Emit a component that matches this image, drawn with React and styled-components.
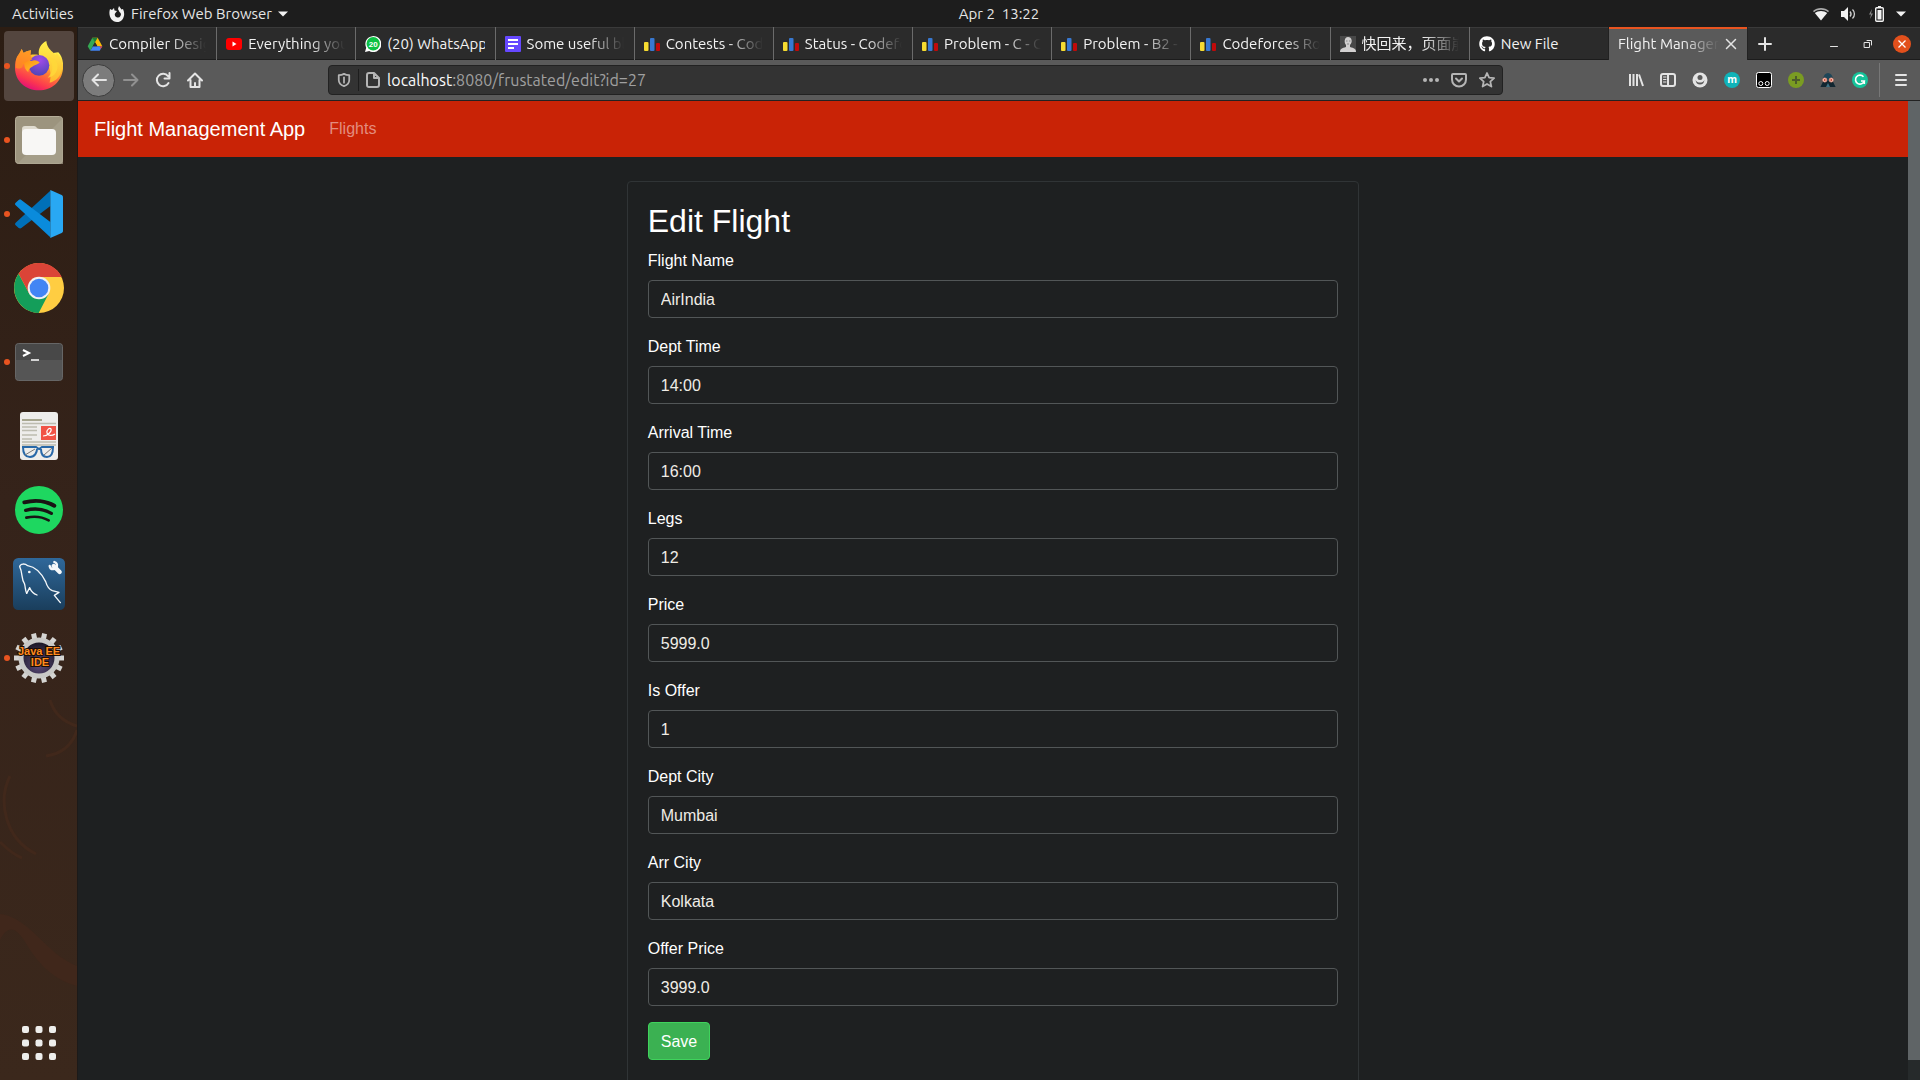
import React from "react";
import styled, { createGlobalStyle } from "styled-components";
import { FaGithub } from "react-icons/fa";

const ui = `Ubuntu, "Noto Sans", "Noto Sans CJK SC", sans-serif`;
const web = `"Liberation Sans", Arial, sans-serif`;

const GlobalStyle = createGlobalStyle`
  *, *::before, *::after { box-sizing: border-box; }
  body { margin: 0; background: #1e2021; }
  button { margin: 0; padding: 0; border: 0; background: none; color: inherit; font: inherit; cursor: pointer; }
  svg { display: block; flex: none; }
`;

const Desktop = styled.div`
  height: 100vh;
  overflow: hidden;
  display: flex;
  flex-direction: column;
  font-family: ${ui};
  font-size: 15px;
  color: #f2f2f2;
`;

/* ---- Top panel ---- */
const Panel = styled.header`
  height: 27px;
  flex: none;
  display: grid;
  grid-template-columns: 78px 1fr auto 1fr;
  align-items: center;
  background: #1d1d1d;
  color: #e6e6e6;
  line-height: 20px;
`;
const Activities = styled.button`
  padding-left: 12px;
  text-align: left;
`;
const AppMenu = styled.button`
  display: flex;
  align-items: center;
  justify-self: start;
  gap: 6px;
  padding-left: 31px;
`;
const Clock = styled.button`
  white-space: pre;
`;
const StatusMenu = styled.button`
  display: flex;
  align-items: center;
  justify-self: end;
  gap: 12px;
  padding-right: 14px;
`;

/* ---- Dock ---- */
const Body = styled.div`
  flex: 1;
  min-height: 0;
  display: flex;
`;
const Dock = styled.nav`
  position: relative;
  width: 78px;
  flex: none;
  display: flex;
  flex-direction: column;
  align-items: center;
  gap: 4px;
  padding: 4px 0 2px;
  border-right: 1px solid #1c1a19;
  background: linear-gradient(#2c1d13, #35231a 45%, #3b281c);
`;
const DockArt = styled.svg`
  position: absolute;
  left: 0;
  bottom: 0;
`;
const Launcher = styled.button`
  position: relative;
  width: 70px;
  height: 70px;
  flex: none;
  display: grid;
  place-items: center;
  border-radius: 4px;
  background: ${(p) => (p.$active ? "#54463f" : "transparent")};
  margin-top: ${(p) => (p.$last ? "auto" : "0")};
`;
const RunningDot = styled.span`
  position: absolute;
  left: 0;
  top: 32px;
  width: 6px;
  height: 6px;
  border-radius: 50%;
  background: #e95420;
`;

/* ---- Browser chrome ---- */
const Browser = styled.div`
  flex: 1;
  min-width: 0;
  display: flex;
  flex-direction: column;
`;
const TabStrip = styled.div`
  height: 33px;
  flex: none;
  display: flex;
  background: #2b2b2b;
  box-shadow: inset 0 1px #3a3a3a, inset 0 -1px #1c1c1c;
`;
const Tabs = styled.div`
  flex: 1;
  min-width: 0;
  display: flex;
`;
const Tab = styled.div`
  flex: 1 1 0;
  min-width: 0;
  display: flex;
  align-items: center;
  gap: 6px;
  padding: 0 10px 0 9px;
  background: ${(p) => (p.$active ? "#5a5a5a" : "transparent")};
  border-right: 1px solid ${(p) => (p.$active ? "#222" : p.$beforeActive ? "#222" : "#6b6b6b")};
  box-shadow: ${(p) => (p.$active ? "inset 0 2px #e95420" : "none")};
`;
const TabTitle = styled.button`
  flex: 1;
  min-width: 0;
  overflow: hidden;
  text-align: left;
  white-space: nowrap;
  line-height: 20px;
  mask-image: ${(p) => (p.$fade ? "linear-gradient(to left, transparent, #000 36px)" : "none")};
`;
const StripControls = styled.div`
  width: 172px;
  flex: none;
  display: flex;
  align-items: center;
  padding-right: 1px;
`;
const StripButton = styled.button`
  width: 34px;
  height: 32px;
  display: grid;
  place-items: center;
  margin-right: ${(p) => (p.$push ? "auto" : "0")};
`;
const ToolBar = styled.div`
  height: 41px;
  flex: none;
  display: flex;
  align-items: center;
  padding: 0 3px 0 4px;
  background: #5a5a5a;
  border-bottom: 1px solid #222;
`;
const ToolButton = styled.button`
  width: 32px;
  height: 32px;
  flex: none;
  display: grid;
  place-items: center;
  border-radius: 50%;
  opacity: ${(p) => (p.$dim ? 0.4 : 1)};
`;
const BackButton = styled(ToolButton)`
  width: 33px;
  height: 33px;
  background: #7c7c7c;
  border: 1px solid #3c3c3c;
`;
const Spacer = styled.span`
  flex: 1 1 0;
`;
const AddressBar = styled.div`
  flex: 10 1 0;
  min-width: 0;
  height: 30px;
  display: flex;
  align-items: center;
  padding: 0 1px;
  background: #333;
  border: 1px solid #222;
  border-radius: 4px;
`;
const BarButton = styled.button`
  width: 28px;
  height: 28px;
  flex: none;
  display: grid;
  place-items: center;
`;
const BarRule = styled.span`
  width: 1px;
  height: 22px;
  background: #1d1d1d;
`;
const Address = styled.a`
  flex: 1;
  color: #a0a0a0;
  text-decoration: none;
  font-size: 16px;
  line-height: 20px;
  white-space: nowrap;
`;
const Host = styled.span`
  color: #fbfbfb;
`;
const ToolRule = styled.span`
  width: 1px;
  height: 34px;
  margin: 0 5px 0 3px;
  background: #777;
`;

/* ---- Web page ---- */
const Viewport = styled.div`
  flex: 1;
  min-height: 0;
  display: flex;
`;
const Page = styled.div`
  flex: 1;
  min-width: 0;
  overflow: hidden;
  background: #1e2021;
  color: #fff;
  font-family: ${web};
  font-size: 16px;
  line-height: 24px;
`;
const ScrollTrack = styled.div`
  width: 12px;
  flex: none;
  background: #262a2b;
`;
const ScrollThumb = styled.div`
  height: 98%;
  background: #5f6466;
`;
const NavBar = styled.nav`
  display: flex;
  align-items: center;
  gap: 24px;
  height: 56px;
  padding: 0 16px;
  background: #c92306;
`;
const Brand = styled.a`
  color: #fff;
  font-size: 20px;
  line-height: 30px;
  text-decoration: none;
`;
const NavLink = styled.a`
  color: #e38d7f;
  line-height: 26px;
  text-decoration: none;
`;
const Column = styled.main`
  width: calc(100% * 5 / 12);
  margin: 24px auto 0;
  padding: 0 15px;
`;
const Card = styled.form`
  padding: 20px 20px 40px;
  border: 1px solid #303436;
  border-radius: 4px;
`;
const Title = styled.h2`
  margin: 0 0 8px;
  font-size: 32px;
  font-weight: 400;
  line-height: 38px;
`;
const Field = styled.div`
  display: flex;
  flex-direction: column;
  gap: 6px;
  margin-bottom: 16px;
  line-height: 26px;
`;
const Input = styled.input`
  width: 100%;
  height: 38px;
  padding: 7px 12px 5px;
  color: #efece6;
  background: #1e2021;
  border: 1px solid #525657;
  border-radius: 4px;
  font: inherit;
  line-height: 24px;
  outline: none;
`;
const Save = styled.button`
  height: 38px;
  padding: 2px 12px 0;
  color: #fff;
  background: #3bb152;
  border: 1px solid #3fd35c;
  border-radius: 4px;
`;

/* ---- Favicons ---- */
const Drive = () => (
  <svg width="16" height="16" viewBox="0 0 48 48">
    <path d="M16 5h16l14 26H31z" fill="#fbbc05" />
    <path d="M16 5L2 31l8 13 14-25z" fill="#34a853" />
    <path d="M16 5l8 14 8-14z" fill="#188038" />
    <path d="M18 31h28l-8 13H10z" fill="#4285f4" />
    <path d="M24 19l-7 12h14z" fill="#2b2b2b" />
    <path d="M38 31h8l-5 8z" fill="#ea4335" />
  </svg>
);
const YouTube = () => (
  <svg width="16" height="16" viewBox="0 0 16 16">
    <rect x="0" y="2" width="16" height="12" rx="3" fill="#f00" />
    <path d="M6.500 5.600v4.800l4-2.400z" fill="#fff" />
  </svg>
);
const WhatsApp = () => (
  <svg width="16" height="16" viewBox="0 0 16 16">
    <path d="M0 16l1.200-4.300A8 8 0 1 1 4.300 15z" fill="#fff" />
    <circle cx="8.200" cy="7.800" r="6.700" fill="#0cc143" />
    <text x="8.200" y="10.600" textAnchor="middle" fontFamily="Liberation Sans" fontWeight="700" fontSize="8" fill="#fff">20</text>
  </svg>
);
const FormIcon = () => (
  <svg width="16" height="16" viewBox="0 0 16 16">
    <rect width="16" height="16" rx="1" fill="#6648ff" />
    <path d="M3 4h10M3 8h10M3 12h6" stroke="#fff" strokeWidth="2" />
  </svg>
);
const Codeforces = () => (
  <svg width="16" height="16" viewBox="0 0 16 16">
    <rect x="0" y="6" width="4.500" height="9" rx="1" fill="#f6db30" />
    <rect x="6" y="2" width="4.500" height="13" rx="1" fill="#3878d0" />
    <rect x="12" y="7" width="4" height="8" rx="1" fill="#c00a0a" />
  </svg>
);
const Portrait = () => (
  <svg width="16" height="16" viewBox="0 0 16 16">
    <rect width="16" height="16" fill="#484848" />
    <path d="M0 16c0-3 2-4 6-5V9C4 7 4 1 8 1s5 5 2 8v2c4 1 6 2 6 5z" fill="#d2d0d0" />
    <path d="M6 5h1.500M9 5h1.500M7 8h2" stroke="#888" strokeWidth="1" />
  </svg>
);

/* ---- Line icons ---- */
const Line = ({ size = 16, w = 2, children, color = "#e4e4e4" }) => (
  <svg width={size} height={size} viewBox="0 0 16 16" fill="none" stroke={color} strokeWidth={w} strokeLinecap="round" strokeLinejoin="round">
    {children}
  </svg>
);
const Caret = () => (
  <svg width="10" height="6" viewBox="0 0 10 6"><path d="M0 .5h10L5 5.500z" fill="#f2f2f2" /></svg>
);

/* ---- Dock icons ---- */
const Firefox = () => (
  <svg width="48" height="50" viewBox="0 0 144 150">
    <defs>
      <linearGradient id="ffBody" x1=".8" y1=".05" x2=".3" y2="1">
        <stop offset="0" stopColor="#fff44f" />
        <stop offset=".3" stopColor="#ffc02c" />
        <stop offset=".55" stopColor="#ff7139" />
        <stop offset=".8" stopColor="#fb3650" />
        <stop offset="1" stopColor="#e00d7a" />
      </linearGradient>
      <radialGradient id="ffGlobe" cx=".55" cy=".25" r=".8">
        <stop offset="0" stopColor="#a24be8" />
        <stop offset="1" stopColor="#4a45b5" />
      </radialGradient>
      <linearGradient id="ffHead" x1="0" y1="0" x2="1" y2="1">
        <stop offset="0" stopColor="#ff8a16" />
        <stop offset="1" stopColor="#ffc928" />
      </linearGradient>
      <linearGradient id="ffFlame" x1="0" y1="0" x2="0" y2="1">
        <stop offset="0" stopColor="#fff04a" />
        <stop offset="1" stopColor="#ffb82e" />
      </linearGradient>
    </defs>
    <path d="M6 48C10 42 16 34 20 24l6 12c6-4 12-6 22-8l-2 14c6-2 14-2 26 0l58-8c12 12 16 32 14 50-4 38-34 64-72 64C32 148 0 120 0 80c0-14 2-24 6-32z" fill="url(#ffBody)" />
    <path d="M72 42C68 24 78 8 94 0c2 16 8 24 18 32 4 4 7 7 9 11l3-8c12 10 18 26 18 42-4 30-18 42-38 48 6-20 6-60-32-83z" fill="url(#ffFlame)" />
    <path d="M94 46c20 14 26 44 4 64 24-2 34-28 28-44-6-10-18-18-32-20z" fill="#ffd83a" opacity=".8" />
    <circle cx="72" cy="73" r="31" fill="url(#ffGlobe)" />
    <path d="M20 66c6-8 18-10 30-6 8-4 16-2 24 4-6 8-16 8-20 12-6 4-14 8-14 18-10-8-12-16-12-24z" fill="url(#ffHead)" />
    <path d="M6 48C10 42 16 34 20 24l6 12c6-4 12-6 22-8-2 8-2 16 4 28-14 2-26 8-30 22-6 6-12 6-20 2 0-14 1-24 4-32z" fill="#ff8c22" opacity=".8" />
  </svg>
);
const Files = () => (
  <svg width="48" height="48" viewBox="0 0 48 48">
    <rect x=".5" y=".5" width="47" height="47" rx="3" fill="#9c947e" stroke="#b5ad98" />
    <path d="M48 2v46H2z" fill="#aaa28e" opacity=".7" />
    <path d="M7 13a3 3 0 0 1 3-3h9c3 0 2 3 6 3v10H7z" fill="#e0dcd0" />
    <rect x="7" y="13" width="34" height="26" rx="4" fill="#f8f7f5" />
    <path d="M7 22v-6h14v6z" fill="#f8f7f5" />
  </svg>
);
const VSCode = () => (
  <svg width="48" height="48" viewBox="0 0 144 144">
    <path d="M106 2L2 98c-3 3-2 6 0 8l9 8c3 2 6 2 8 0l87-66z" fill="#0070b8" />
    <path d="M106 142L2 46c-3-3-2-6 0-8l9-8c3-2 6-2 8 0l87 66z" fill="#0a8bdc" />
    <path d="M106 0l34 15c3 2 4 4 4 7v100c0 3-1 5-4 7l-34 15z" fill="#29a8f3" />
  </svg>
);
const Chrome = () => (
  <svg width="50" height="50" viewBox="0 0 150 150">
    <circle cx="75" cy="75" r="75" fill="#ffcd42" />
    <path d="M14 32L46 92h58l-30 58A75 75 0 0 1 14 32z" fill="#149e5a" />
    <path d="M14 32A75 75 0 0 1 143 42H75L46 92z" fill="#db4437" />
    <circle cx="75" cy="75" r="34" fill="#f1f1f1" />
    <circle cx="75" cy="75" r="28" fill="#4285f4" />
  </svg>
);
const Terminal = () => (
  <svg width="48" height="38" viewBox="0 0 48 38">
    <rect x=".5" y=".5" width="47" height="37" rx="3" fill="#555" stroke="#666" />
    <path d="M1 17V4a3 3 0 0 1 3-3h40a3 3 0 0 1 3 3v13z" fill="#484848" />
    <path d="M8 7l6 3-6 3" fill="none" stroke="#fff" strokeWidth="2" />
    <path d="M16 17h8" stroke="#fff" strokeWidth="1.500" />
  </svg>
);
const Documents = () => (
  <svg width="38" height="48" viewBox="0 0 38 48">
    <rect width="38" height="48" rx="3" fill="#eeedeb" />
    <path d="M2 8h20" stroke="#a7a68f" strokeWidth="2" />
    <path d="M2 11.500h34M2 15h15M2 18.500h15M2 23h15M2 27h10M2 30h34M2 33h34" stroke="#bdbcb0" strokeWidth="1.300" />
    <rect x="21" y="14" width="15" height="14" fill="#f15346" />
    <path d="M23 24c5 0 9-5 8-7s-5 1-4 4 5 3 8 1" fill="none" stroke="#fff" strokeWidth="1.200" />
    <path d="M2 35h14l3 2 3-2h12M3 35c0 6 2 10 7 10s7-5 7-8M21 37c0 5 2 8 6 8s6-4 6-10" fill="none" stroke="#2868a8" strokeWidth="2" />
    <path d="M5 43l10-6M24 43l8-7" stroke="#777" strokeWidth="1" />
  </svg>
);
const Spotify = () => (
  <svg width="48" height="48" viewBox="0 0 144 144" fill="none" stroke="#191414" strokeLinecap="round">
    <circle cx="72" cy="72" r="72" fill="#1ed760" stroke="none" />
    <path d="M28 49c30-8 65-5 90 10" strokeWidth="12" />
    <path d="M32 73c26-7 54-4 77 9" strokeWidth="10" />
    <path d="M34 95c22-5 47-3 67 8" strokeWidth="8" />
  </svg>
);
const Workbench = () => (
  <svg width="52" height="52" viewBox="0 0 156 156" fill="none" stroke="#f5f8fa" strokeWidth="4" strokeLinejoin="round" strokeLinecap="round">
    <defs>
      <linearGradient id="wb" x1="0" y1="0" x2="0" y2="1">
        <stop offset="0" stopColor="#2f689a" />
        <stop offset="1" stopColor="#1a3e5c" />
      </linearGradient>
    </defs>
    <rect width="156" height="156" rx="16" fill="url(#wb)" stroke="none" />
    <path d="M41 106C36 96 38 88 34 76 24 62 30 46 20 26c2-10 16-10 24-3 26 4 42 24 54 48 4 14 12 24 20 27l20 5-14 9 18 22" />
    <path d="M41 106l9-17c4 10 12 18 22 22" />
    <circle cx="49" cy="42" r="2" fill="#f5f8fa" />
    <path d="M122 24l18 18" strokeWidth="13" />
    <path d="M124 12a11 11 0 1 1-14 12" strokeWidth="7" />
  </svg>
);
const JavaEE = () => (
  <svg width="52" height="52" viewBox="0 0 52 52">
    <defs>
      <radialGradient id="jee" cx=".5" cy=".7" r=".7">
        <stop offset="0" stopColor="#5b4a7a" />
        <stop offset="1" stopColor="#14121c" />
      </radialGradient>
    </defs>
    <g stroke="#d4d4d2" strokeWidth="5">
      {[...Array(14)].map((_, i) => (
        <path key={i} d="M26 1v8" transform={`rotate(${(i * 360) / 14 + 13} 26 26)`} />
      ))}
    </g>
    <circle cx="26" cy="26" r="18" fill="url(#jee)" stroke="#c9c9c7" strokeWidth="5" />
    <g fontFamily="Liberation Sans" fontWeight="700" textAnchor="middle" fill="#ff8a1e" stroke="#1a0d04" strokeWidth="2" paintOrder="stroke">
      <text x="26" y="23" fontSize="11">Java EE</text>
      <text x="27" y="34" fontSize="11">IDE</text>
    </g>
  </svg>
);
const AppsGrid = () => (
  <svg width="34" height="34" viewBox="0 0 34 34" fill="#eeeeec">
    {[0, 13.5, 27].map((y) => [0, 13.5, 27].map((x) => <rect key={`${x}-${y}`} x={x} y={y} width="7" height="7" rx="2" />))}
  </svg>
);

const launchers = [
  { name: "Firefox Web Browser", Icon: Firefox, running: true, active: true },
  { name: "Files", Icon: Files, running: true },
  { name: "Visual Studio Code", Icon: VSCode, running: true },
  { name: "Google Chrome", Icon: Chrome },
  { name: "Terminal", Icon: Terminal, running: true },
  { name: "Document Viewer", Icon: Documents },
  { name: "Spotify", Icon: Spotify },
  { name: "MySQL Workbench", Icon: Workbench },
  { name: "Eclipse", Icon: JavaEE, running: true },
];

const tabs = [
  { title: "Compiler Design", Icon: Drive, fade: true },
  { title: "Everything you need", Icon: YouTube, fade: true },
  { title: "(20) WhatsApp", Icon: WhatsApp },
  { title: "Some useful blogs", Icon: FormIcon, fade: true },
  { title: "Contests - Codeforces", Icon: Codeforces, fade: true },
  { title: "Status - Codeforces", Icon: Codeforces, fade: true },
  { title: "Problem - C - Codeforces", Icon: Codeforces, fade: true },
  { title: "Problem - B2 - Codeforces", Icon: Codeforces, fade: true },
  { title: "Codeforces Round", Icon: Codeforces, fade: true },
  { title: "快回来，页面崩溃", Icon: Portrait, fade: true },
  { title: "New File", Icon: () => <FaGithub size={16} color="#fff" /> },
  { title: "Flight Management", active: true, fade: true },
];

const fields = [
  ["name", "Flight Name", "AirIndia"],
  ["deptTime", "Dept Time", "14:00"],
  ["arrTime", "Arrival Time", "16:00"],
  ["legs", "Legs", "12"],
  ["price", "Price", "5999.0"],
  ["isOffer", "Is Offer", "1"],
  ["deptCity", "Dept City", "Mumbai"],
  ["arrCity", "Arr City", "Kolkata"],
  ["offerPrice", "Offer Price", "3999.0"],
];

function TopPanel() {
  return (
    <Panel>
      <Activities>Activities</Activities>
      <AppMenu>
        <svg width="16" height="16" viewBox="0 0 16 16">
          <path d="M1 3l2 1 2-2 .5 2.500L8 5 6 7.500A3 3 0 1 0 10.500 6L9 3l1-3 2.500 3.500L14 3c3 6 0 13-6 13S-1 9 1 3z" fill="#f2f2f2" />
        </svg>
        Firefox Web Browser
        <Caret />
      </AppMenu>
      <Clock>{"Apr 2  13:22"}</Clock>
      <StatusMenu aria-label="System">
        <svg width="16" height="14" viewBox="0 0 16 14">
          <path d="M0 4C4 0 12 0 16 4l-1 1.200C11 2 5 2 1 5.200z" fill="#aaa" />
          <path d="M1.800 6C5 3.200 11 3.200 14.200 6L8 13.500z" fill="#f2f2f2" />
        </svg>
        <svg width="16" height="14" viewBox="0 0 16 14">
          <path d="M0 4h3l4-4v14L3 10H0z" fill="#f2f2f2" />
          <path d="M9 4.500c1.300 1.500 1.300 3.500 0 5M11.500 2.500c2.600 2.500 2.600 6.500 0 9" fill="none" stroke="#d0d0d0" strokeWidth="1.300" />
        </svg>
        <svg width="15" height="16" viewBox="0 0 15 16">
          <path d="M3 3L0 8.500h2L1 13l3-5.500H2z" fill="#888" />
          <path d="M9 0h3v2H9z" fill="#f2f2f2" />
          <rect x="6.700" y="1.700" width="7.600" height="13.600" rx="1" fill="none" stroke="#f2f2f2" strokeWidth="1.400" />
          <path d="M8.500 4h4v9.500h-4z" fill="#f2f2f2" />
        </svg>
        <Caret />
      </StatusMenu>
    </Panel>
  );
}

function DockBar() {
  return (
    <Dock>
      <DockArt width="77" height="380" viewBox="0 0 77 380" fill="none" stroke="#41281b" strokeWidth="3">
        <path d="M50 0C54 14 64 22 77 26M77 30C72 46 60 54 46 56M10 76C-2 100 4 138 36 154M0 142c6 6 12 12 22 16" />
        <path d="M0 214c20 2 34 20 50 34 8 8 18 14 27 18v20C56 280 40 268 24 240 16 228 8 224 0 240z" fill="#40271b" stroke="none" />
      </DockArt>
      {launchers.map(({ name, Icon, running, active }) => (
        <Launcher key={name} aria-label={name} $active={active}>
          {running && <RunningDot />}
          <Icon />
        </Launcher>
      ))}
      <Launcher aria-label="Show Applications" $last>
        <AppsGrid />
      </Launcher>
    </Dock>
  );
}

function TabBar() {
  return (
    <TabStrip>
      <Tabs>
        {tabs.map(({ title, Icon, fade, active }, i) => (
          <Tab key={title} $active={active} $beforeActive={tabs[i + 1]?.active}>
            {Icon && <Icon />}
            <TabTitle $fade={fade}>{title}</TabTitle>
            {active && (
              <button aria-label="Close tab">
                <Line size={12} w={2}><path d="M2 2l12 12M14 2L2 14" /></Line>
              </button>
            )}
          </Tab>
        ))}
      </Tabs>
      <StripControls>
        <StripButton aria-label="New tab" $push>
          <Line><path d="M8 2v12M2 8h12" /></Line>
        </StripButton>
        <StripButton aria-label="Minimize">
          <Line w={1}><path d="M4.500 10.500h7" /></Line>
        </StripButton>
        <StripButton aria-label="Restore">
          <Line w={1}><path d="M4.500 6.500h5v5h-5zM7 4.500h4.500V9" /></Line>
        </StripButton>
        <StripButton aria-label="Close">
          <svg width="18" height="18" viewBox="0 0 18 18">
            <circle cx="9" cy="9" r="9" fill="#e2501c" />
            <path d="M5.500 5.500l7 7M12.500 5.500l-7 7" stroke="#fff" strokeWidth="1.300" />
          </svg>
        </StripButton>
      </StripControls>
    </TabStrip>
  );
}

function NavigationBar() {
  return (
    <ToolBar>
      <BackButton aria-label="Back">
        <Line><path d="M15 8H1.500M7 2.500L1.500 8 7 13.500" /></Line>
      </BackButton>
      <ToolButton aria-label="Forward" $dim>
        <Line><path d="M1 8h13.500M9 2.500L14.500 8 9 13.500" /></Line>
      </ToolButton>
      <ToolButton aria-label="Reload">
        <Line><path d="M13.500 11A6.200 6.200 0 1 1 13 4.200M14.500 1v5.500H9.500" /></Line>
      </ToolButton>
      <ToolButton aria-label="Home">
        <Line><path d="M1 8.500L8 1.500l7 7M3.500 8v7h9V8M8 15v-4" /></Line>
      </ToolButton>
      <Spacer />
      <AddressBar>
        <BarButton aria-label="Protections">
          <Line size={14} color="#b5b5b5">
            <path d="M8 1C6 2.200 4 2.500 2 2.500V8c0 4 3 6 6 7 3-1 6-3 6-7V2.500C12 2.500 10 2.200 8 1z" />
            <path d="M8 5v6" />
          </Line>
        </BarButton>
        <BarRule />
        <BarButton aria-label="Site information">
          <Line color="#b5b5b5"><path d="M2 3c0-1.300.7-2 2-2h5l5 5v7c0 1.300-.7 2-2 2H4c-1.300 0-2-.7-2-2zM9 1v5h5" /></Line>
        </BarButton>
        <Address href="#">
          <Host>localhost</Host>:8080/frustated/edit?id=27
        </Address>
        <BarButton aria-label="Page actions">
          <svg width="16" height="16" viewBox="0 0 16 16" fill="#b5b5b5">
            <circle cx="2" cy="8" r="2" /><circle cx="8" cy="8" r="2" /><circle cx="14" cy="8" r="2" />
          </svg>
        </BarButton>
        <BarButton aria-label="Save to Pocket">
          <Line color="#b5b5b5"><path d="M2 2h12c.7 0 1 .4 1 1v4.500a7 7 0 0 1-14 0V3c0-.6.300-1 1-1zM5 6.500l3 3 3-3" /></Line>
        </BarButton>
        <BarButton aria-label="Bookmark">
          <Line color="#b5b5b5" w={1.8}><path d="M8 1l2.100 4.700 5 .5-3.800 3.400 1.100 5L8 12l-4.400 2.600 1.100-5L.9 6.200l5-.5z" /></Line>
        </BarButton>
      </AddressBar>
      <Spacer />
      <ToolButton aria-label="Library">
        <Line><path d="M2 2v12M5.500 2v12M9 2v12M11 2.500L15 14" strokeLinecap="butt" /></Line>
      </ToolButton>
      <ToolButton aria-label="Sidebars">
        <Line><rect x="1" y="2" width="14" height="12" rx="2" /><path d="M8 2v12" /><path d="M3.500 5H6M3.500 7.500H6M3.500 10H6" strokeWidth="1" /></Line>
      </ToolButton>
      <ToolButton aria-label="Account">
        <svg width="16" height="16" viewBox="0 0 16 16">
          <circle cx="8" cy="8" r="7.500" fill="#e4e4e4" />
          <circle cx="8" cy="5.500" r="2.500" fill="#5a5a5a" />
          <path d="M3.500 8c.5 3 2 4.500 4.500 4.500s4-1.500 4.500-4.500c-1 2-2.500 2.500-4.500 2.500S4.500 10 3.500 8z" fill="#5a5a5a" />
        </svg>
      </ToolButton>
      <ToolButton aria-label="Mercury">
        <svg width="16" height="16" viewBox="0 0 16 16">
          <circle cx="8" cy="8" r="8" fill="#10b3b8" />
          <text x="8" y="11" textAnchor="middle" fontFamily="Noto Sans" fontWeight="700" fontSize="10" fill="#fff">m</text>
        </svg>
      </ToolButton>
      <ToolButton aria-label="Tampermonkey">
        <svg width="16" height="16" viewBox="0 0 16 16">
          <rect x=".5" y=".5" width="15" height="15" rx="2" fill="#000" stroke="#fff" />
          <circle cx="4.800" cy="11.500" r="2" fill="#000" stroke="#fff" /><circle cx="11.200" cy="11.500" r="2" fill="#000" stroke="#fff" />
        </svg>
      </ToolButton>
      <ToolButton aria-label="Add">
        <svg width="16" height="16" viewBox="0 0 16 16">
          <circle cx="8" cy="8" r="8" fill="#7a9c22" />
          <path d="M8 4v8M4 8h8" stroke="#4c5c2a" strokeWidth="2" />
        </svg>
      </ToolButton>
      <ToolButton aria-label="Incognito">
        <svg width="16" height="16" viewBox="0 0 16 16">
          <path d="M3 7C3.500 3 5.500 1 8 1s4.500 2 5 6v3l2.500 5H.5L3 10z" fill="#1f4658" />
          <path d="M3 10l5-1 5 1 2.500 5H.5z" fill="#122630" />
          <path d="M6 15l2-4 2 4z" fill="#3d7184" />
          <circle cx="4.800" cy="8" r="2" fill="#fff" stroke="#e98a72" />
          <circle cx="11.200" cy="8" r="2" fill="#fff" stroke="#e98a72" />
          <circle cx="4.800" cy="8" r="1" fill="#c8381f" />
          <circle cx="11.200" cy="8" r="1" fill="#c8381f" />
        </svg>
      </ToolButton>
      <ToolButton aria-label="Grammarly">
        <svg width="16" height="16" viewBox="0 0 16 16">
          <circle cx="8" cy="8" r="8" fill="#15c39a" />
          <path d="M11.500 4.800A4.500 4.500 0 1 0 12.300 9H9M12.300 9v3" fill="none" stroke="#fff" strokeWidth="1.600" />
        </svg>
      </ToolButton>
      <ToolRule />
      <ToolButton aria-label="Menu">
        <Line><path d="M3 3h10M3 8h10M3 13h10" /></Line>
      </ToolButton>
    </ToolBar>
  );
}

function EditFlight() {
  return (
    <Column>
      <Card onSubmit={(e) => e.preventDefault()}>
        <Title>Edit Flight</Title>
        {fields.map(([id, label, value]) => (
          <Field key={id}>
            <label htmlFor={id}>{label}</label>
            <Input id={id} name={id} defaultValue={value} />
          </Field>
        ))}
        <Save type="submit">Save</Save>
      </Card>
    </Column>
  );
}

export default function App() {
  return (
    <Desktop>
      <GlobalStyle />
      <TopPanel />
      <Body>
        <DockBar />
        <Browser>
          <TabBar />
          <NavigationBar />
          <Viewport>
            <Page>
              <NavBar>
                <Brand href="#">Flight Management App</Brand>
                <NavLink href="#">Flights</NavLink>
              </NavBar>
              <EditFlight />
            </Page>
            <ScrollTrack>
              <ScrollThumb />
            </ScrollTrack>
          </Viewport>
        </Browser>
      </Body>
    </Desktop>
  );
}
